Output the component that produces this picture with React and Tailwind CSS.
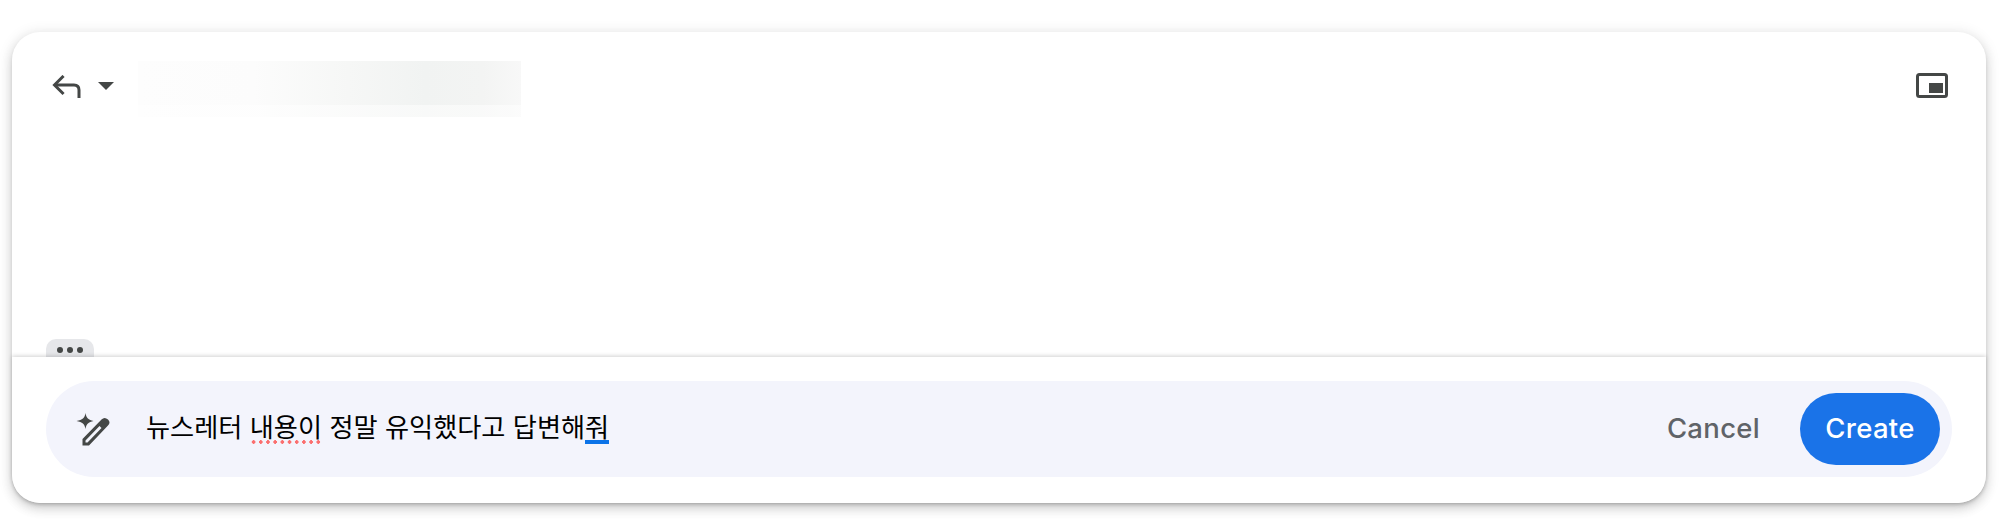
const ReplyIcon = () => (
  <svg width="29" height="24" viewBox="0 0 29 24" fill="none" stroke="#444746" strokeWidth="3" className="shrink-0">
    <path d="M10.5 2 L2.5 10 L10.5 18" strokeLinecap="square" />
    <path d="M3 10 H22 Q27 10 27 15 V23" />
  </svg>
);

const CaretIcon = () => (
  <svg width="16" height="8" viewBox="0 0 16 8" fill="#444746">
    <path d="M0 0 H16 L8 8 Z" />
  </svg>
);

const PipIcon = () => (
  <svg width="32" height="25" viewBox="0 0 32 25" fill="none">
    <rect x="1.5" y="1.5" width="29" height="22" rx="2" stroke="#444746" strokeWidth="3" />
    <rect x="13" y="10" width="14" height="10" fill="#444746" />
  </svg>
);

const SparkPencilIcon = () => (
  <svg width="35" height="33" viewBox="0 0 34 33" fill="none">
    <path d="M9 0 C9.8 4.8 12 7 17 8 C12 9 9.8 11.2 9 16 C8.2 11.2 6 9 0 8 C6 7 8.2 4.8 9 0 Z" fill="#444746" />
    <path d="M6 32.5 V26 L25 6.5 Q28 3.5 31.5 6.5 Q34.5 9.5 31.5 12.5 L12.5 32.5 Z M9 29.5 H11 L25 15 L23 13 L9 27.5 Z" fill="#444746" fillRule="evenodd" />
  </svg>
);

export default function App() {
  return (
    <div className="h-[530px] w-[2002px] overflow-hidden bg-white pl-3 pt-8 font-['Inter','Noto_Sans_CJK_KR',sans-serif]">
      <div className="flex h-[471px] w-[1974px] flex-col rounded-[28px] bg-white shadow-[0_6px_12px_0_rgba(0,0,0,0.12),0_2px_14px_2px_rgba(0,0,0,0.09),0_3px_5px_-2px_rgba(0,0,0,0.22)]">
        <div className="relative flex-1">
          <div className="flex items-start pl-[40px] pr-[38px] pt-[29px]">
            <div className="mt-[14px]">
              <ReplyIcon />
            </div>
            <div className="ml-[17px] mt-[21px]">
              <CaretIcon />
            </div>
            <div className="ml-[24px] h-[56px] w-[383px] bg-[linear-gradient(180deg,transparent_78%,rgba(255,255,255,0.5)_78%),linear-gradient(90deg,#fdfdfd_0%,#fcfcfc_30%,#f6f7f6_55%,#f1f3f2_75%,#f3f4f3_90%,#f8f8f8_100%)]" />
            <div className="ml-auto mt-[12px]">
              <PipIcon />
            </div>
          </div>
          <div className="absolute bottom-0 left-[34px] flex h-[18px] w-[48px] items-center justify-center gap-[4px] rounded-t-[10px] bg-[#e6e7ea] pt-[3px]">
            <span className="h-[6px] w-[6px] rounded-full bg-[#444746]" />
            <span className="h-[6px] w-[6px] rounded-full bg-[#444746]" />
            <span className="h-[6px] w-[6px] rounded-full bg-[#444746]" />
          </div>
        </div>
        <div className="relative h-[146px] rounded-b-[28px] bg-white px-[34px] pt-[24px] shadow-[0_-1px_4px_rgba(0,0,0,0.18)]">
          <div className="flex h-[96px] items-center rounded-full bg-[#f3f4fc] pl-[30px] pr-[12px]">
            <SparkPencilIcon />
            <div className="ml-[35px] -translate-y-[1px] whitespace-nowrap text-[26.2px] text-black">
              뉴스레터{' '}
              <span className="relative">
                내용이
                <span className="absolute -bottom-[1px] left-0 right-0 h-[4px] bg-[radial-gradient(circle,#fb6f6f_1.6px,transparent_2px)] bg-[length:7.2px_4px]" />
              </span>{' '}
              정말 유익했다고 답변해
              <span className="relative">
                줘
                <span className="absolute -bottom-[1px] left-0 right-0 h-[4px] bg-[#0b73e8]" />
              </span>
            </div>
            <button className="ml-auto text-[27.5px] font-[450] tracking-[0.3px] text-[#5f6368]">Cancel</button>
            <button className="ml-[40px] h-[72px] w-[140px] rounded-full bg-[#1a73e8] text-[27.5px] font-[450] tracking-[0.3px] text-white">
              Create
            </button>
          </div>
        </div>
      </div>
    </div>
  );
}
